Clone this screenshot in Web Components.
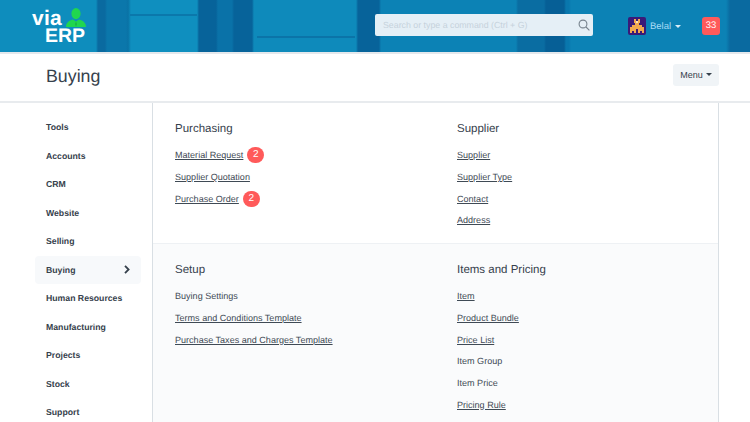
<!DOCTYPE html>
<html>
<head>
<meta charset="utf-8">
<title>Buying</title>
<style>
    html, body { margin: 0; height: 422px; overflow: hidden; background: #fff; }
    body { font-family: "Liberation Sans", Arial, sans-serif; color: #36414c; text-rendering: geometricPrecision; }
</style>
</head>
<body>
<app-navbar></app-navbar>
<page-head title="Buying"></page-head>
<desk-layout>
    <desk-sidebar slot="side" items="Tools,Accounts,CRM,Website,Selling,Buying,Human Resources,Manufacturing,Projects,Stock,Support" active="Buying"></desk-sidebar>
    <desk-section>
        <link-group heading="Purchasing">
            <desk-link href="#" count="2">Material Request</desk-link>
            <desk-link href="#">Supplier Quotation</desk-link>
            <desk-link href="#" count="2">Purchase Order</desk-link>
        </link-group>
        <link-group heading="Supplier">
            <desk-link href="#">Supplier</desk-link>
            <desk-link href="#">Supplier Type</desk-link>
            <desk-link href="#">Contact</desk-link>
            <desk-link href="#">Address</desk-link>
        </link-group>
    </desk-section>
    <desk-section shaded>
        <link-group heading="Setup">
            <desk-link>Buying Settings</desk-link>
            <desk-link href="#">Terms and Conditions Template</desk-link>
            <desk-link href="#">Purchase Taxes and Charges Template</desk-link>
        </link-group>
        <link-group heading="Items and Pricing">
            <desk-link href="#">Item</desk-link>
            <desk-link href="#">Product Bundle</desk-link>
            <desk-link href="#">Price List</desk-link>
            <desk-link>Item Group</desk-link>
            <desk-link>Item Price</desk-link>
            <desk-link href="#">Pricing Rule</desk-link>
        </link-group>
    </desk-section>
</desk-layout>

<script>
class AppNavbar extends HTMLElement {
    constructor () {
        super();
        const root = this.attachShadow({mode: 'open'});
        root.innerHTML = `<style>
            :host {
                display: flex;
                align-items: center;
                height: 52px;
                border-bottom: 2px solid #e4e8ec;
                color: #fff;
                background:
                    linear-gradient(#0b78ab, #0b78ab) 130px 14px / 67px 2px no-repeat,
                    linear-gradient(#0b74a8, #0b74a8) 257px 36px / 98px 2px no-repeat,
                    linear-gradient(90deg,
                    #0e8dbd 96px, #0a6aa0 98px 105px, #0b77ab 107px 126px, #0a72a5 128px,
                    #0f8fbf 131px 197px, #07639a 199px 216px, #0a72a8 218px 232px, #07639a 234px 252px,
                    #0e8abb 254px 356px, #07639a 358px 379px, #0c82b5 381px 516px,
                    #0a6da2 518px 544px, #065f96 546px 564px, #0977ad 566px 569px,
                    #0c82b5 571px 726px, #0a6aa0 730px);
            }
            .logo { width: 60px; margin-left: 31px; line-height: 1; font-weight: 700; position: relative; height: 37px; flex: none; }
            .via { font-size: 21px; display: block; margin: 0 0 -2px 1px; letter-spacing: .2px; }
            .erp { font-size: 19.5px; display: block; margin-left: 14px; }
            .logo svg { position: absolute; left: 35px; top: 0; }
            .search {
                margin: -2px 0 0 284px;
                width: 218px; height: 22px; flex: none;
                display: flex; align-items: center; justify-content: space-between;
                box-sizing: border-box; padding: 0 3px 0 8px;
                background: #e5eff6; border-radius: 2px;
                font-size: 8.8px; color: #c6d2dc;
            }
            .user { margin-left: 35px; display: flex; align-items: center; font-size: 9.5px; color: #a9dcf5; }
            .user svg.avatar { width: 18px; height: 18px; margin-right: 4px; border-radius: 2px; }
            .caret { width: 0; height: 0; margin-left: 4px; border: 3px solid transparent; border-top-color: #d9eef8; border-bottom: 0; }
            .count {
                margin-left: 21px; width: 18px; height: 18px; border-radius: 3px;
                background: #ff5a5a; font-size: 9.5px; text-align: center; line-height: 18px; color: #fff;
            }
        </style>
        <div class="logo">
            <span class="via">via</span>
            <span class="erp">ERP</span>
            <svg width="20" height="20" viewBox="0 0 20 20">
                <ellipse cx="10" cy="5.6" rx="4.6" ry="5.6" fill="#20d64f"/>
                <path d="M0 19c0-4 2.500-6.500 7-7.500l3 2 3-2c4.500 1 7 3.500 7 7.500z" fill="#20d64f"/>
                <path d="M10 13.500l-.8 2.500.8 3 .8-3z" fill="#18b040"/>
            </svg>
        </div>
        <div class="search">
            <span>Search or type a command (Ctrl + G)</span>
            <svg width="12" height="12" viewBox="0 0 12 12" fill="none" stroke="#77838e" stroke-width="1.1">
                <circle cx="5" cy="5" r="3.900"/><path d="M8 8l3.400 3.400"/>
            </svg>
        </div>
        <div class="user">
            <svg class="avatar" viewBox="0 0 9 9" shape-rendering="crispEdges">
                <rect width="9" height="9" fill="#3a1a78"/>
                <path fill="#f2a94e" d="M3 1h1v1h1V1h1v2H5.500v1H7v1h1v3H7V7H6v1H5V6H4v2H3V7H2v1H1V5h1V4h1.500V3H3z"/>
                <path fill="#f8e2b8" d="M4 2h1v1H4z"/>
            </svg>
            <span>Belal</span><span class="caret"></span>
        </div>
        <div class="count">33</div>`;
    }
}

class PageHead extends HTMLElement {
    constructor () {
        super();
        const root = this.attachShadow({mode: 'open'});
        root.innerHTML = `<style>
            :host {
                display: flex; align-items: center; justify-content: space-between;
                height: 47px; padding: 0 31px 0 46px;
                border-bottom: 2px solid #e8ebee;
            }
            h1 { margin: 0 0 3px; font-size: 17.8px; font-weight: 400; color: #36414c; }
            button {
                width: 46px; height: 22px; padding: 0; margin-bottom: 6px; border: 0; border-radius: 3px;
                background: #f0f4f7; color: #36414c; font: 9px "Liberation Sans", Arial, sans-serif;
                display: flex; align-items: center; justify-content: center;
            }
            i { width: 0; height: 0; margin-left: 3px; border: 3px solid transparent; border-top-color: #36414c; border-bottom: 0; }
        </style>
        <h1>${this.getAttribute('title')}</h1>
        <button>Menu<i></i></button>`;
    }
}

class DeskLayout extends HTMLElement {
    constructor () {
        super();
        const root = this.attachShadow({mode: 'open'});
        root.innerHTML = `<style>
            :host { display: grid; grid-template-columns: 152px 567px; }
            .main { border-left: 1px solid #d9dfe4; border-right: 1px solid #d9dfe4; min-height: 320px; }
        </style>
        <slot name="side"></slot>
        <div class="main"><slot></slot></div>`;
    }
}

class DeskSidebar extends HTMLElement {
    constructor () {
        super();
        const root = this.attachShadow({mode: 'open'});
        const active = this.getAttribute('active');
        const items = this.getAttribute('items').split(',').map(name => `
            <div class="item ${name === active ? 'active' : ''}">
                <span>${name}</span>
                ${name === active ? '<svg width="6" height="9" viewBox="0 0 6 9" fill="none" stroke="#36414c" stroke-width="1.8"><path d="M1 .8l3.600 3.700L1 8.200"/></svg>' : ''}
            </div>`).join('');
        root.innerHTML = `<style>
            :host { display: block; padding: 10px 11px 0 35px; }
            .item {
                height: 28.5px; padding: 0 11px;
                display: flex; align-items: center; justify-content: space-between;
                font-size: 8.7px; font-weight: 700; color: #36414c; border-radius: 4px; white-space: nowrap;
            }
            .active { background: #f7f9fb; }
        </style>${items}`;
    }
}

class DeskSection extends HTMLElement {
    constructor () {
        super();
        const root = this.attachShadow({mode: 'open'});
        root.innerHTML = `<style>
            :host {
                display: grid; grid-template-columns: 282px 1fr;
                height: 141px; padding-left: 22px; box-sizing: border-box;
                border-bottom: 1px solid #eef1f4;
            }
            :host([shaded]) { background: #fafbfc; border-bottom: 0; height: 190px; }
        </style>
        <slot></slot>`;
    }
}

class LinkGroup extends HTMLElement {
    constructor () {
        super();
        const root = this.attachShadow({mode: 'open'});
        root.innerHTML = `<style>
            :host { display: block; padding-top: 18px; }
            h4 { margin: 0 0 7.500px; font-size: 11.500px; line-height: 16px; font-weight: 400; color: #36414c; }
        </style>
        <h4>${this.getAttribute('heading')}</h4>
        <slot></slot>`;
    }
}

class DeskLink extends HTMLElement {
    constructor () {
        super();
        const root = this.attachShadow({mode: 'open'});
        const href = this.getAttribute('href');
        const count = this.getAttribute('count');
        const tag = href ? `<a href="${href}"><slot></slot></a>` : `<span><slot></slot></span>`;
        root.innerHTML = `<style>
            :host { display: flex; align-items: center; height: 21.7px; font-size: 9.05px; color: #3f4a55; }
            a { color: inherit; text-decoration: underline; }
            b {
                margin-left: 4px; width: 17px; height: 16px; line-height: 16px; border-radius: 8px;
                background: #ff5a5a; color: #fff; font-size: 10px; font-weight: 400; text-align: center;
            }
        </style>
        ${tag}${count ? `<b>${count}</b>` : ''}`;
    }
}

customElements.define('app-navbar', AppNavbar);
customElements.define('page-head', PageHead);
customElements.define('desk-layout', DeskLayout);
customElements.define('desk-sidebar', DeskSidebar);
customElements.define('desk-section', DeskSection);
customElements.define('link-group', LinkGroup);
customElements.define('desk-link', DeskLink);
</script>
</body>
</html>
